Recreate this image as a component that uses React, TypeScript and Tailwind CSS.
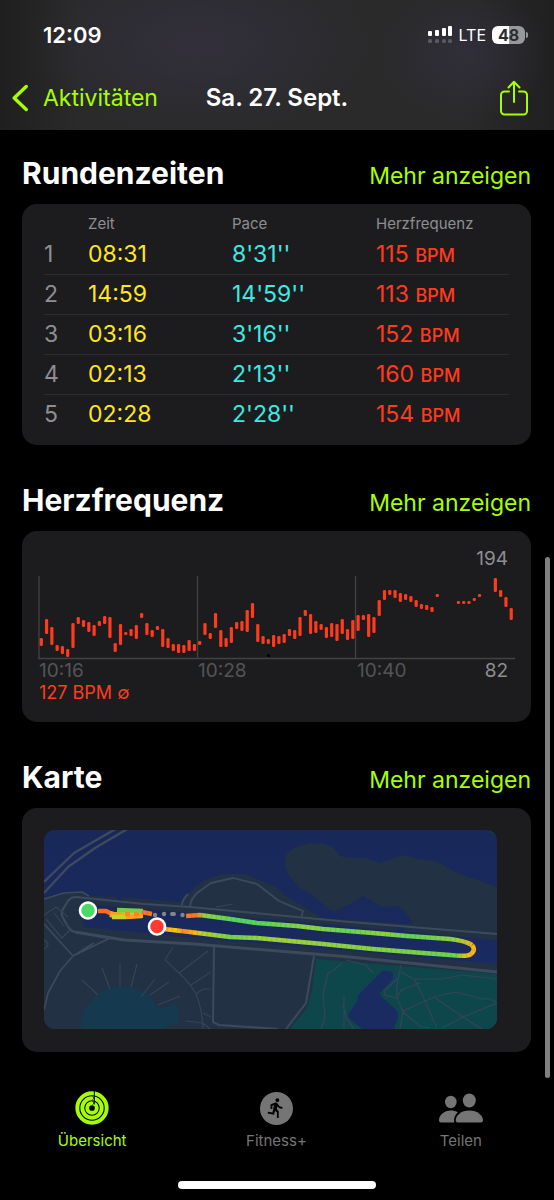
import { FC, ReactNode } from "react";
import { MdDirectionsRun } from "react-icons/md";

const laps = [
  { lap: 1, time: "08:31", pace: "8'31''", bpm: 115 },
  { lap: 2, time: "14:59", pace: "14'59''", bpm: 113 },
  { lap: 3, time: "03:16", pace: "3'16''", bpm: 152 },
  { lap: 4, time: "02:13", pace: "2'13''", bpm: 160 },
  { lap: 5, time: "02:28", pace: "2'28''", bpm: 154 },
];

// [top, bottom] of every sample, null where the sensor lost contact
const samples: ([number, number] | null)[] = [
  [63, 71], [44, 59], [52, 70], [70, 76], [71, 79], [74, 82], [48, 73], [42, 49], [45, 52], [47, 57],
  [50, 61], [46, 51], [41, 49], [42, 63], [68, 77], [49, 70], [57, 60], [54, 61], [50, 64], [38, 43],
  [48, 60], [55, 62], [51, 55], [54, 72], [63, 73], [69, 76], [69, 78], [70, 78], [65, 76], [69, 76],
  [66, 70], [48, 60], [58, 64], [38, 53], [55, 72], [63, 72], [52, 68], [47, 54], [46, 56], [35, 57],
  [28, 43], [49, 67], [61, 69], [64, 69], [60, 72], [61, 69], [59, 68], [54, 61], [55, 64], [42, 61],
  [35, 41], [39, 59], [46, 58], [49, 55], [52, 63], [48, 62], [49, 66], [44, 59], [54, 65], [45, 64],
  [40, 56], [40, 45], [39, 62], [42, 58], [25, 41], [15, 25], [15, 20], [15, 23], [18, 27], [19, 25],
  [21, 27], [25, 32], [29, 34], [30, 35], [32, 37], [19, 22], null, null, null, [26, 29],
  [26, 29], [26, 29], [23, 26], [19, 22], null, null, [3, 17], [15, 22], [22, 32], [33, 45],
];

const StatusBar: FC = () => (
  <div className="flex h-[70px] items-center justify-between pr-[26px] pl-[43px]">
    <span className="text-[22px] font-semibold">12:09</span>
    <div className="flex items-center gap-1.5">
      <svg width="25" height="18" viewBox="0 0 25 18" fill="#fff">
        <rect x="0" y="5" width="4" height="5" rx="1" />
        <rect x="7" y="4" width="4" height="6" rx="1" />
        <rect x="14" y="2" width="4" height="8" rx="1" />
        <rect x="20" y="0" width="4" height="10" rx="1" />
        <g fill="#59595e">
          <rect x="0" y="13" width="4" height="4" rx="1.5" />
          <rect x="7" y="13" width="4" height="4" rx="1.5" />
          <rect x="14" y="13" width="4" height="4" rx="1.5" />
          <rect x="20" y="13" width="4" height="4" rx="1.5" />
        </g>
      </svg>
      <span className="text-[16px]">LTE</span>
      <div className="flex items-center gap-px">
        <span className="flex h-[18px] w-[33px] items-center justify-center rounded-md bg-linear-to-r from-white from-50% to-[#98989b] to-50% text-[16px] font-bold text-[#2c2c30]">
          48
        </span>
        <span className="h-1.5 w-[2px] rounded-r-full bg-[#98989b]" />
      </div>
    </div>
  </div>
);

const Header: FC = () => (
  <header className="h-[130px] bg-[#272728] bg-[radial-gradient(170px_90px_at_36%_34%,#322f3b_0%,transparent_100%),radial-gradient(85px_65px_at_84%_42%,#302e39_0%,transparent_100%),linear-gradient(to_right,#1f1f1f_0%,#2a2a2b_14%,#2a2a2b_84%,#202021_100%)] text-white">
    <StatusBar />
    <div className="grid grid-cols-[1fr_auto_1fr] items-center px-3">
      <a href="#activities" className="flex items-center gap-[14px] text-[23px] leading-14 text-[#a6ff00]">
        <svg width="17" height="28" viewBox="0 0 17 28" fill="none" stroke="currentColor" strokeWidth="3.4" strokeLinecap="round" strokeLinejoin="round">
          <path d="M14.2 2.5 2.2 14 14.2 25.5" />
        </svg>
        Aktivitäten
      </a>
      <h1 className="text-[24px] font-semibold">Sa. 27. Sept.</h1>
      <button type="button" aria-label="Teilen" className="mr-[14px] justify-self-end text-[#a6ff00]">
        <svg width="28" height="36" viewBox="0 0 28 36" fill="none" stroke="currentColor" strokeWidth="2" strokeLinecap="round" strokeLinejoin="round">
          <path d="M9 11.5H4.5a3.5 3.5 0 0 0-3.5 3.5v16a3.5 3.5 0 0 0 3.5 3.5h19a3.5 3.5 0 0 0 3.5-3.5V15a3.5 3.5 0 0 0-3.5-3.5H19" />
          <path d="M14 22V2M8.5 7.5 14 1.8l5.5 5.7" />
        </svg>
      </button>
    </div>
  </header>
);

const Section: FC<{ title: string; href: string; children: ReactNode }> = ({ title, href, children }) => (
  <section>
    <div className="flex h-[60px] items-baseline justify-between">
      <h2 className="text-[30px] leading-[58px] font-bold text-white">{title}</h2>
      <a href={href} className="text-[23px] text-[#a6ff00]">Mehr anzeigen</a>
    </div>
    <div className="rounded-[15px] bg-[#1c1c1e]">{children}</div>
  </section>
);

const LapTable: FC = () => (
  <div className="px-[22px] pt-[10px] pb-[11px]">
    <table className="w-full table-fixed text-left text-[23px]">
      <thead>
        <tr className="h-5 text-[15px] leading-5 text-[#8e8e93]">
          <th className="w-[44px]" aria-label="Runde" />
          <th className="w-36 font-normal">Zeit</th>
          <th className="w-36 font-normal">Pace</th>
          <th className="font-normal">Herzfrequenz</th>
        </tr>
      </thead>
      <tbody>
        {laps.map(({ lap, time, pace, bpm }) => (
          <tr key={lap} className="h-10 border-b border-[#2d2d2f] last:border-0">
            <td className="text-[#8e8e93]">{lap}</td>
            <td className="text-[#ffe620]">{time}</td>
            <td className="text-[#3ee9e2]">{pace}</td>
            <td className="text-[#ff3b1d]">
              {bpm} <span className="text-[18px] font-medium">BPM</span>
            </td>
          </tr>
        ))}
      </tbody>
    </table>
  </div>
);

const HeartRate: FC = () => (
  <div className="px-4 pt-4 pb-[17px] text-[19px] leading-6 text-[#8e8e93]">
    <p className="pr-[7px] text-right">194</p>
    <svg className="mt-1 block w-full" viewBox="0 0 477 86" role="img" aria-label="Herzfrequenz">
      <path d="M1 1v83M159.5 1v83M317.5 1v83M0 83.5h477" stroke="#424244" strokeWidth="1.3" />
      {samples.map((s, i) =>
        s ? <rect key={i} x={1.7 + i * 5.28} y={s[0]} width="3.2" height={s[1] - s[0]} rx="1.3" fill="#ff3b1d" /> : null
      )}
      <circle cx="230.5" cy="80.5" r="1.5" fill="#000" />
    </svg>
    <div className="grid grid-cols-3 leading-5 text-[#545456]">
      <span className="pl-px">10:16</span>
      <span className="pl-px">10:28</span>
      <span className="flex justify-between pr-[7px] pl-px">
        10:40 <span className="text-[#8e8e93]">82</span>
      </span>
    </div>
    <p className="pl-px text-[18px] text-[#ff3b1d]">127 BPM ∅</p>
  </div>
);

const outbound = "M98 82 108 84M142 86 156 85 186 89 213 93 253 96 279 99 329 103 363 106 406 109Q422 111 428 115";
const inbound = "M428 115Q432 120 427 124 424 127 406 125L379 123 329 119 279 114 213 108 186 107 146 102 120 99";

const RouteMap: FC = () => (
  <div className="pt-[22px] pr-[34px] pb-[23px] pl-[22px]">
    <svg className="block w-full rounded-[11px]" viewBox="0 0 453 199" role="img" aria-label="Karte der Strecke" fill="none">
      <defs>
        <linearGradient id="water" x2="0" y2="1">
          <stop stopColor="#182859" />
          <stop offset="1" stopColor="#1a2b62" />
        </linearGradient>
        <linearGradient id="pace" gradientUnits="userSpaceOnUse" x1="98" x2="430" y1="0" y2="0">
          <stop stopColor="#ff7322" />
          <stop offset=".16" stopColor="#ff7322" />
          <stop offset=".19" stopColor="#8fd443" />
          <stop offset=".28" stopColor="#51d65d" />
          <stop offset=".38" stopColor="#5cd556" />
          <stop offset=".5" stopColor="#90d141" />
          <stop offset=".62" stopColor="#65d353" />
          <stop offset=".72" stopColor="#8fd13f" />
          <stop offset=".82" stopColor="#5fd257" />
          <stop offset=".95" stopColor="#9ad03a" />
          <stop offset="1" stopColor="#ffb414" />
        </linearGradient>
        <linearGradient id="paceBack" gradientUnits="userSpaceOnUse" x1="120" x2="430" y1="0" y2="0">
          <stop stopColor="#ffb80c" />
          <stop offset=".04" stopColor="#ffc414" />
          <stop offset=".06" stopColor="#ff8a1c" />
          <stop offset=".1" stopColor="#ffb80c" />
          <stop offset=".12" stopColor="#b8cf2e" />
          <stop offset=".22" stopColor="#75d14b" />
          <stop offset=".36" stopColor="#a3d037" />
          <stop offset=".6" stopColor="#8bd142" />
          <stop offset=".94" stopColor="#6cd24e" />
          <stop offset=".97" stopColor="#d9c522" />
          <stop offset="1" stopColor="#ffb414" />
        </linearGradient>
      </defs>

      {/* land and water */}
      <path d="M0 0h453v199H0z" fill="url(#water)" />
      <g fill="#223143">
        <path d="M0 69 20 63 38 61 45 66 73 67 74 71 78 71V67L136 72 146 62 159 51 168 47 179 44H202L218 51 233 58 239 64 278 88 369 94 453 100V199H0z" />
        <path d="M241 30Q242 22 250 18L265 13 281 14 289 17 296 26 306 28 321 28 336 33 359 25 374 29 391 31 416 44 453 57V105L369 97V93L360 81 354 76 338 77 319 66 306 74 291 81Q286 81 281 76L268 65 256 58 245 46Q240 37 241 30z" />
      </g>
      <path d="M39 74 270 93 453 110V134L140 107 39 97z" fill="url(#water)" />
      <path d="M353 97h7v6h-7z" fill="#1a2b62" />
      <path d="M445 1 453 7V0z" fill="#0e474b" />
      <path d="M37 199C37 173 56 157 79 157 96 157 109 166 114 179L133 174 136 194 122 195 121 199z" fill="#153a4f" />
      <path d="M272 129 453 144V199H246L263 178 268 160z" fill="#0e474b" />
      <path d="M338 141Q349 140 349 144V149L337 162Q335 165 339 168L350 178Q355 183 354 187L350 199H318L305 188Q303 184 306 181L313 172 314 165z" fill="#1a2b62" />

      {/* streets */}
      <g stroke="#3d4a5e" strokeLinejoin="round">
        <path d="M0 52 30 23 75-3M0 63 24 37 51 18 85-2" strokeWidth="2.4" />
        <path d="M453 104 306 92 146 77 100 74 32 67Q27 67 24 71L19 79Q17 82 18 86L23 95Q26 101 31 102L66 108" strokeWidth="2.2" />
        <path d="M31 102 80 110 150 114 306 127 453 142" strokeWidth="3" />
        <path d="M0 69 20 63 38 62 45 66M0 94 29 126 66 108M29 126 16 141 4 163 0 180M50 113 29 126" strokeWidth="1.6" />
        <path d="M146 76Q147 69 153 63L167 53 189 48 213 54 235 71 259 81 257 88M138 75Q138 70 144 64" strokeWidth="1.8" />
        <path d="M170 117 169 192 175 195 234 199M270 126 262 173 242 199" strokeWidth="2" />
      </g>
      <g stroke="#36435a" strokeWidth="1.2">
        <path d="M0 85 12 77 24 87M2 89 18 108 27 99 21 93M10 83 20 96M0 110Q8 114 0 119" />
        <path d="M38 150 54 165M58 138 66 159M76 133V157M93 134 87 157M111 149 97 167M125 152 106 165M136 166 114 175" />
        <path d="M129 117 121 130 135 143Q146 153 152 164 158 178 159 199M135 143 164 121M147 155 167 142M152 164 159 159H167M142 191 159 193 166 199M159 183 167 187M172 77 189 74" />
        <path d="M298 133 290 140 284 143 279 164 281 188 277 199M302 130 322 135 329 143M299 175 303 189 310 199M300 165V199" />
        <path d="M357 135 353 155 353 168 359 182 356 199M357 142 370 149 376 160 393 198M370 149 399 149 418 145 453 149M376 153 357 160 353 168 341 165 340 161 353 149M359 181 390 167 411 162 439 169 447 169 453 173 419 187 398 198M390 167 419 187 438 199M359 182 377 197 386 198" />
      </g>

      {/* route */}
      <g strokeWidth="4.6" strokeLinejoin="round">
        <path d="M54 81 62 81 68 84" stroke="#ff6b26" />
        <path d="M66 84 70 85H99" stroke="#ffa11a" strokeWidth="6" />
        <path d="M68 87H82M76 80 84 83 96 83" stroke="#cbd12c" />
        <path d="M73 80 99 81" stroke="#75d14c" />
        <path d="M82 87 98 86" stroke="#ffa11a" />
        <path d="M81 84 99 84" stroke="#ff8522" strokeDasharray="5 4" />
        <path d={outbound} stroke="url(#pace)" />
        <path d={inbound} stroke="url(#paceBack)" />
        <g stroke="#38601c" strokeOpacity=".16" strokeDasharray="1 4">
          <path d={outbound} />
          <path d={inbound} />
        </g>
      </g>
      <g fill="#85868c">
        <circle cx="111" cy="85" r="2.2" />
        <circle cx="120" cy="84" r="2.2" />
        <rect x="126" y="82" width="6" height="4" rx="2" />
        <circle cx="138.5" cy="85" r="2.2" />
      </g>
      <g stroke="#fff" strokeWidth="2.6">
        <circle cx="44" cy="80.5" r="8" fill="#4cd964" />
        <circle cx="113" cy="96.5" r="8" fill="#ff3b30" />
      </g>
    </svg>
  </div>
);

const RingsIcon: FC = () => (
  <svg width="34" height="34" viewBox="0 0 34 34" fill="none" stroke="currentColor" strokeWidth="3.9">
    <circle cx="17" cy="17" r="14.7" />
    <circle cx="17" cy="17" r="9.7" />
    <circle cx="17" cy="17" r="4.8" />
    <path d="M19.3 0v13.5" stroke="#000" strokeWidth="1" />
    <path d="M17.5 5.5l1.8 1.5-1.8 1.5M17.5 10.5l1.8 1.5-1.8 1.5" stroke="#000" strokeWidth=".8" />
  </svg>
);

const PeopleIcon: FC = () => (
  <svg width="44" height="30" viewBox="0 0 44 30" fill="currentColor">
    <ellipse cx="11.8" cy="9" rx="5.8" ry="6.2" />
    <ellipse cx="30.3" cy="7.5" rx="6.5" ry="7" />
    <path d="M18.8 19.2C15.800 22 14.500 25.500 15.200 29.500H2Q0 29.500 0 27.500C0 22 5 17.500 11.800 17.500 14.500 17.500 17 18.200 18.800 19.200z" />
    <path d="M19 29.5Q16.700 29.500 16.700 27.500C16.700 22.500 22 17.500 30.300 17.500S44 22.500 44 27.500Q44 29.500 41.700 29.500z" />
  </svg>
);

const tabs = [
  { label: "Übersicht", icon: <RingsIcon />, active: true },
  {
    label: "Fitness+",
    icon: (
      <span className="flex size-[33px] items-center justify-center rounded-full bg-[#757575] text-black">
        <MdDirectionsRun size={22} />
      </span>
    ),
    active: false,
  },
  { label: "Teilen", icon: <PeopleIcon />, active: false },
];

const TabBar: FC = () => (
  <nav className="mt-9">
    <div className="grid grid-cols-3 pr-px">
      {tabs.map(({ label, icon, active }) => (
        <button
          type="button"
          key={label}
          className={`flex flex-col items-center text-[15px] leading-5 ${active ? "text-[#a6ff00]" : "text-[#757575]"}`}
        >
          <span className="mb-[3px] flex h-10 items-center">{icon}</span>
          {label}
        </button>
      ))}
    </div>
    <div className="mx-auto mt-[30px] h-2 w-[198px] rounded-full bg-white" />
  </nav>
);

const App: FC = () => (
  <div className="relative min-h-screen bg-black pb-[10px] font-['Inter','Liberation_Sans',sans-serif]">
    <Header />
    <main className="flex flex-col gap-[26px] px-[22px] pt-[14px] pr-[23px]">
      <Section title="Rundenzeiten" href="#laps">
        <LapTable />
      </Section>
      <Section title="Herzfrequenz" href="#heart-rate">
        <HeartRate />
      </Section>
      <Section title="Karte" href="#map">
        <RouteMap />
      </Section>
    </main>
    <TabBar />
    {/* scroll indicator */}
    <div className="absolute top-[557px] right-1 h-[521px] w-[5px] rounded-full bg-[#808080]" />
  </div>
);

export default App;
